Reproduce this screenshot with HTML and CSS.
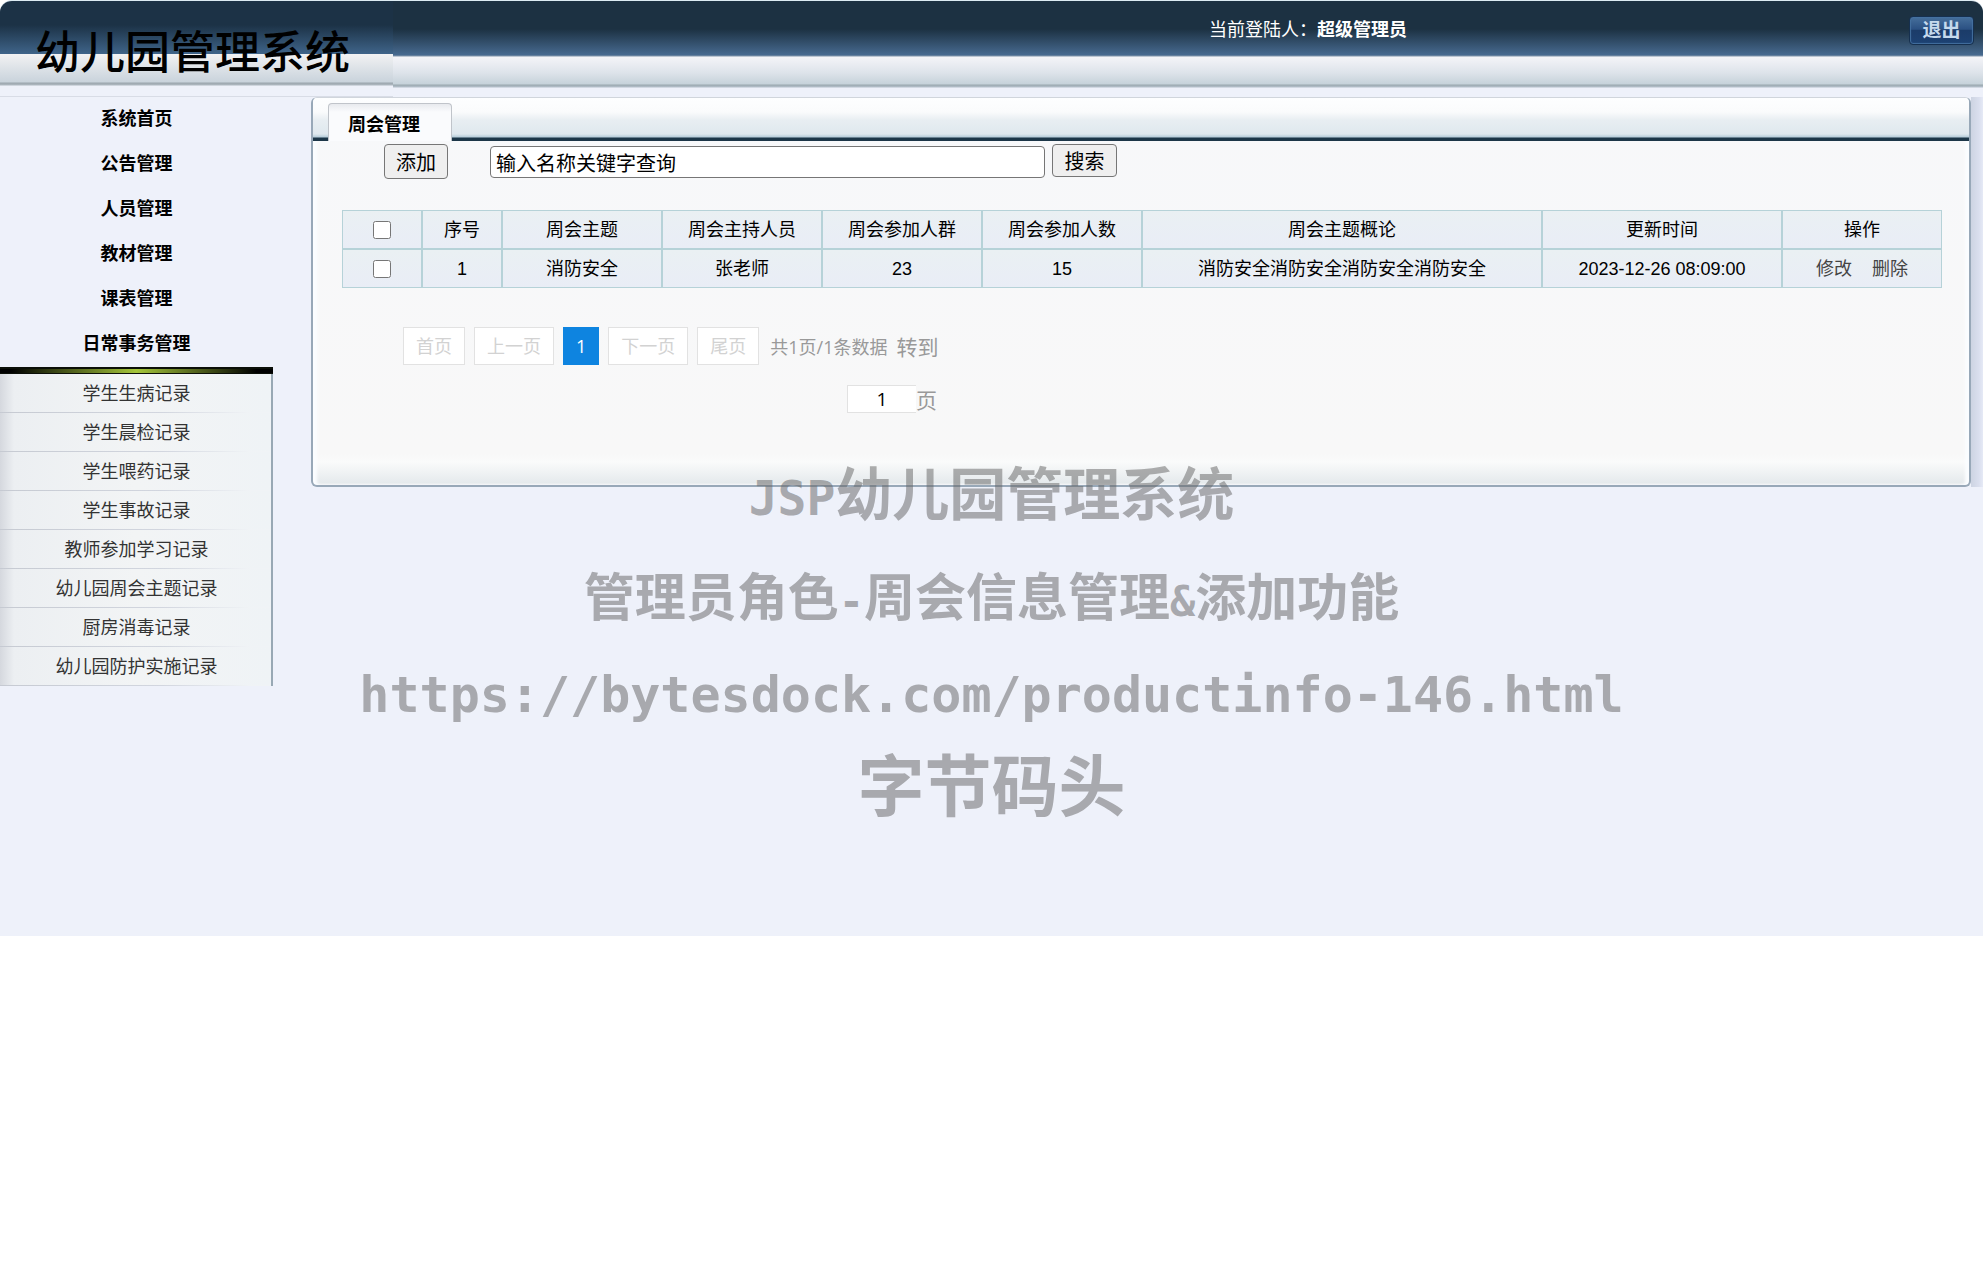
FILE: index.html
```html
<!DOCTYPE html>
<html lang="zh-CN">
  <head>
    <meta charset="UTF-8">
    <meta name="viewport" content="width=device-width, initial-scale=1.0">
    <title>幼儿园管理系统</title>
    <link rel="stylesheet" href="styles.css">
  </head>
  <body>
    <div class="page">
      <header class="header">
        <h1 class="logo">幼儿园管理系统</h1>
        <div class="topbar">
          <p class="user">当前登陆人：<b>超级管理员</b></p>
          <button type="button" class="logout">退出</button>
        </div>
      </header>

      <div class="layout">
        <nav class="sidebar">
          <ul class="menu">
            <li><a href="#">系统首页</a></li>
            <li><a href="#">公告管理</a></li>
            <li><a href="#">人员管理</a></li>
            <li><a href="#">教材管理</a></li>
            <li><a href="#">课表管理</a></li>
            <li><a href="#">日常事务管理</a></li>
          </ul>
          <ul class="submenu">
            <li><a href="#">学生生病记录</a></li>
            <li><a href="#">学生晨检记录</a></li>
            <li><a href="#">学生喂药记录</a></li>
            <li><a href="#">学生事故记录</a></li>
            <li><a href="#">教师参加学习记录</a></li>
            <li><a href="#">幼儿园周会主题记录</a></li>
            <li><a href="#">厨房消毒记录</a></li>
            <li><a href="#">幼儿园防护实施记录</a></li>
          </ul>
        </nav>

        <main class="main">
          <section class="panel">
            <div class="tabs">
              <h2 class="tab">周会管理</h2>
            </div>
            <form class="toolbar">
              <button type="button" class="btn add">添加</button>
              <input type="text" class="keyword" name="keyword" value="输入名称关键字查询" aria-label="关键字">
              <button type="button" class="btn search">搜索</button>
            </form>

            <table class="list">
              <colgroup>
                <col class="c5"><col class="c5"><col class="c10"><col class="c10"><col class="c10"><col class="c10"><col class="c25"><col class="c15"><col class="c10">
              </colgroup>
              <thead>
                <tr>
                  <th><input type="checkbox" aria-label="全选"></th>
                  <th>序号</th>
                  <th>周会主题</th>
                  <th>周会主持人员</th>
                  <th>周会参加人群</th>
                  <th>周会参加人数</th>
                  <th>周会主题概论</th>
                  <th>更新时间</th>
                  <th>操作</th>
                </tr>
              </thead>
              <tbody>
                <tr>
                  <td><input type="checkbox" aria-label="选择第1行"></td>
                  <td>1</td>
                  <td>消防安全</td>
                  <td>张老师</td>
                  <td>23</td>
                  <td>15</td>
                  <td>消防安全消防安全消防安全消防安全</td>
                  <td>2023-12-26 08:09:00</td>
                  <td><div class="ops"><a href="#">修改</a><a href="#">删除</a></div></td>
                </tr>
              </tbody>
            </table>

            <div class="pager">
              <div class="pages">
                <a href="#">首页</a>
                <a href="#">上一页</a>
                <a href="#" class="current">1</a>
                <a href="#">下一页</a>
                <a href="#">尾页</a>
                <span class="total">共1页/1条数据</span>
                <label for="pageNo">转到</label>
              </div>
              <div class="jump">
                <input type="text" id="pageNo" value="1">
                <span>页</span>
              </div>
            </div>
          </section>
        </main>
      </div>

      <div class="watermark">
        <p class="wm-title"><span>JSP</span>幼儿园管理系统</p>
        <p class="wm-desc">管理员角色<span>-</span>周会信息管理<span>&amp;</span>添加功能</p>
        <p class="wm-url">https://bytesdock.com/productinfo-146.html</p>
        <p class="wm-name">字节码头</p>
      </div>
    </div>
  </body>
</html>
```
FILE: styles.css
```css
* {
  box-sizing: border-box;
}
body {
  margin: 0;
  font-family: "Liberation Sans", "Noto Sans CJK SC", sans-serif;
  font-size: 18px;
  color: #000;
  background: #fff;
}
h1, h2, p, ul {
  margin: 0;
  padding: 0;
}
ul {
  list-style: none;
}
a {
  color: inherit;
  text-decoration: none;
}
button, input {
  font-family: inherit;
}
.page {
  position: relative;
  padding-bottom: 250px;
  background: #eef1fa;
  border-radius: 12px 12px 0 0;
}

/* header */
.header {
  display: flex;
  height: 97px;
  border-top: 1px solid #dcebf3;
  border-radius: 12px 12px 0 0;
  overflow: hidden;
}
.logo {
  width: 393px;
  padding-left: 35px;
  border-bottom: 1px solid #d8dce6;
  font-family: "Noto Sans CJK SC", sans-serif;
  font-size: 45px;
  font-weight: 500;
  line-height: 98px;
  white-space: nowrap;
  background: linear-gradient(#1c3246 0, #1c3246 24px, #3f6489 53px, #f2f2f3 53px, #c9d3dc 81px, #9ba6ae 82px, #aeb8c0 84px, #eef1fa 85px);
}
.topbar {
  flex: 1;
  display: flex;
  align-items: flex-start;
  padding: 15px 9px 0 816px;
  background: linear-gradient(#1c3142 0, #1c3142 28px, #476a90 54px, #8296ab 55px, #f4f4f8 56px, #dde3ea 72px, #c6d2da 83px, #9aa8af 84px, #b4bfca 86px, #eef1fa 87px);
}
.user {
  color: #fff;
  line-height: 28px;
  white-space: nowrap;
}
.logout {
  width: 65px;
  height: 29px;
  margin-left: auto;
  padding: 0;
  border: 1px solid #16304f;
  border-radius: 4px;
  background: linear-gradient(#466f9b, #2b5183 45%, #1b3c69 50%, #1d4273);
  box-shadow: inset 0 0 1px 1px #4470a0;
  color: #c5d9ec;
  font-size: 19px;
  font-weight: bold;
  line-height: 24px;
}

/* menu */
.layout {
  display: flex;
  align-items: flex-start;
}
.sidebar {
  width: 273px;
  margin-right: 38px;
  flex: none;
  text-align: center;
}
.menu li {
  height: 45px;
  line-height: 45px;
  font-weight: bold;
}
.submenu {
  color: #333;
  border-right: 2px solid #98a8b4;
  background: linear-gradient(90deg, #d5d8de, #eceff2 14px, #f2f4f5 50%, #eff3f6);
}
.submenu::before {
  content: "";
  display: block;
  height: 4px;
  margin-right: -2px;
  border: solid #0b0f08;
  border-width: 2px 0 1px;
  background: linear-gradient(90deg, #000 4%, #a5c63a 50%, #000 94%);
}
.submenu li {
  height: 39px;
  padding-left: 2px;
  line-height: 41px;
  background: linear-gradient(90deg, #c6cad2, #d2d6df 60%, #f0f3f6 92%) bottom / 100% 1px no-repeat;
}

/* content panel */
.main {
  flex: 1;
  padding-right: 12px;
  background: linear-gradient(90deg, #cdd4e2, #dadfee 8px, #e6eaf6) right / 12px 100% no-repeat;
}
.panel {
  min-height: 390px;
  border: solid #98a8b8;
  border-width: 1px 2px 2px;
  border-top-color: #d0d5dc;
  border-radius: 6px;
  background: linear-gradient(#f7f8fa 0, #f8f8f8 92%, #fafbfb 94%, #e3e8eb);
  box-shadow: inset 4px 0 3px #fbfdff, inset -4px 0 3px #fbfdff;
}
.tabs {
  height: 43px;
  padding: 5px 0 0 15px;
  border-radius: 4px 4px 0 0;
  background: linear-gradient(#fdfeff, #fafbfc 14px, #e8eef2 22px, #dfe8ee 36px, #b7cdda 39px, #1c3648 40px);
}
.tab {
  width: 124px;
  height: 38px;
  padding-left: 19px;
  border: 1px solid #c0c4ca;
  border-bottom: 0;
  border-radius: 4px 4px 0 0;
  background: linear-gradient(#e8eaee, #fafbfd 8px);
  font-size: 18px;
  line-height: 42px;
}
.toolbar {
  display: flex;
  align-items: flex-start;
  padding: 3px 0 0 71px;
}
.btn {
  padding: 0;
  border: 1px solid #767676;
  border-radius: 4px;
  background: #efefef;
  color: #000;
  font-size: 20px;
}
.add {
  width: 64px;
  height: 35px;
}
.search {
  width: 65px;
  height: 33px;
  margin-left: 7px;
}
.keyword {
  width: 555px;
  height: 32px;
  margin: 2px 0 0 42px;
  padding: 0 5px;
  border: 1px solid #767676;
  border-radius: 4px;
  background: #fff;
  font-size: 20px;
}

.list {
  width: calc(100% - 56px);
  margin: 31px 27px 0 29px;
  table-layout: fixed;
  border-spacing: 0;
  text-align: center;
}
.c5 {
  width: 5%;
}
.c10 {
  width: 10%;
}
.c15 {
  width: 15%;
}
.c25 {
  width: 25%;
}
.list th, .list td {
  height: 39px;
  padding: 0;
  border: 1px solid #b6d2d8;
  background: linear-gradient(#eaf0f3, #e9edf6);
  font-weight: normal;
  line-height: 30px;
}
.list input {
  display: block;
  width: 18px;
  height: 18px;
  margin: 0 auto;
}
.ops {
  display: flex;
  justify-content: center;
  gap: 20px;
  color: #444;
}

/* pager */
.pager {
  width: 534px;
  margin: 39px 0 0 90px;
  font-family: "Open Sans", "Noto Sans CJK SC", sans-serif;
  color: #999;
  white-space: nowrap;
}
.pages {
  display: flex;
  align-items: center;
  gap: 9px;
  height: 38px;
}
.pages a {
  flex: none;
  padding: 0 12px;
  border: 1px solid #e2e2e2;
  background: #fff;
  color: #d2d2d2;
  line-height: 36px;
}
.pages .current {
  border-color: #0e84e0;
  background: #0e84e0;
  color: #fff;
}
.total {
  margin-left: 2px;
}
.pages label, .jump {
  font-size: 21px;
}
.pages label {
  margin-left: auto;
}
.jump {
  display: flex;
  align-items: center;
  justify-content: flex-end;
  margin-top: 20px;
  height: 28px;
}
.jump input {
  width: 69px;
  height: 28px;
  padding: 0;
  border: 1px solid #e2e2e2;
  border-right: 0;
  background: #fff;
  font-size: 19px;
  text-align: center;
}

/* watermark over the whole page */
.watermark {
  position: absolute;
  top: 443px;
  left: 0;
  right: 0;
  color: rgba(98, 98, 98, 0.5);
  font-family: "Noto Sans CJK SC", sans-serif;
  font-weight: bold;
  text-align: center;
  white-space: nowrap;
  pointer-events: none;
}
.watermark span, .wm-url {
  font-family: "DejaVu Sans Mono", monospace;
}
.watermark span {
  line-height: 1;
}
.wm-title {
  height: 104px;
  font-size: 57px;
  line-height: 94px;
}
.wm-title span {
  font-size: 48px;
}
.wm-desc {
  height: 96px;
  font-size: 51px;
  line-height: 94px;
}
.wm-desc span {
  font-size: 42px;
}
.wm-url {
  height: 92px;
  font-size: 50px;
  line-height: 104px;
}
.wm-name {
  font-size: 67px;
  line-height: 94px;
}
```
